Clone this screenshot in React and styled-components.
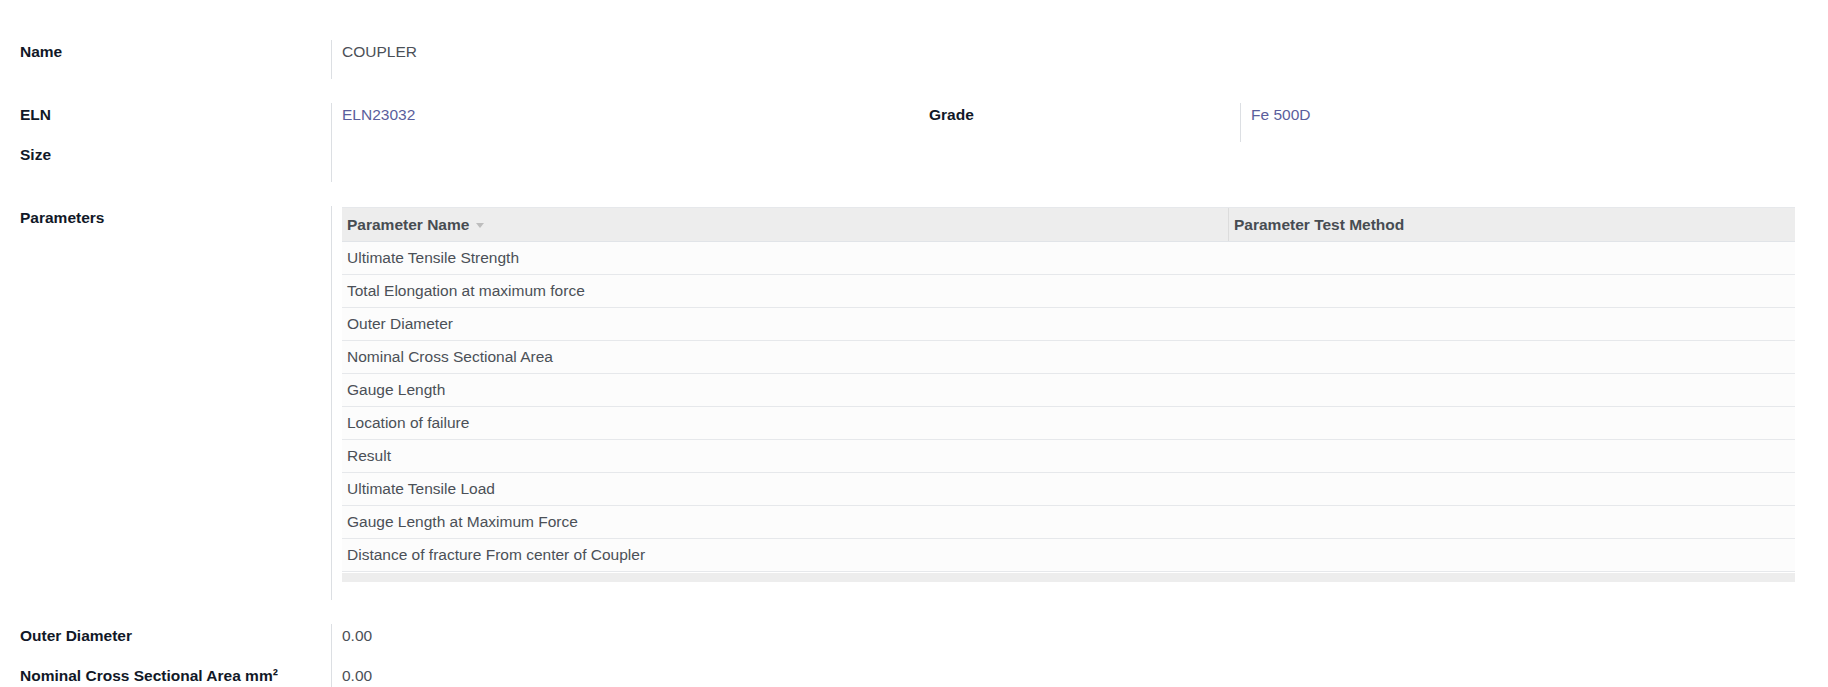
import React from 'react';
import styled, { createGlobalStyle } from 'styled-components';

const GlobalStyle = createGlobalStyle`
  html, body {
    margin: 0;
    padding: 0;
    background: #ffffff;
  }
  body {
    font-family: "Liberation Sans", Arial, sans-serif;
    font-size: 15.5px;
    color: #212529;
  }
`;

const Sheet = styled.div`
  padding: 40px 33px 0 20px;
  display: flex;
  flex-direction: column;
  gap: 24px;
`;

const Group = styled.div`
  display: grid;
  grid-template-columns: ${(p) => (p.split ? '909px 1fr' : '1fr')};
`;

const Column = styled.div`
  display: flex;
  flex-direction: column;
`;

const Field = styled.div`
  display: grid;
  grid-template-columns: 311px 1fr;
  min-height: ${(p) => (p.roomy ? '40px' : '39px')};
`;

const Label = styled.div`
  font-weight: 700;
  color: #111827;
  line-height: 22px;
  padding-top: 1px;
`;

const Value = styled.div`
  border-left: 1px solid #dcdfe3;
  padding: 1px 0 0 10px;
  line-height: 22px;
  color: ${(p) => (p.link ? '#5a5e9c' : '#4b5057')};
  padding-bottom: ${(p) => (p.tall ? '18px' : '0')};
`;

const Table = styled.div`
  display: flex;
  flex-direction: column;
`;

const HeadRow = styled.div`
  display: grid;
  grid-template-columns: 886px 1fr;
  background: #ededed;
  border-top: 1px solid #e6e8eb;
  border-bottom: 1px solid #e1e4e8;
  height: 33px;
`;

const HeadCell = styled.div`
  display: flex;
  align-items: center;
  gap: 7px;
  padding-left: 5px;
  font-weight: 700;
  color: #474c52;
  & + & {
    border-left: 1px solid #dcdcdc;
  }
`;

const Caret = styled.span`
  width: 0;
  height: 0;
  border-left: 4px solid transparent;
  border-right: 4px solid transparent;
  border-top: 5px solid #bdbdbd;
  margin-top: 2px;
`;

const BodyRow = styled.div`
  height: 32px;
  border-bottom: 1px solid #e6e8eb;
  background: #fcfcfc;
  display: flex;
  align-items: center;
  padding-left: 5px;
  color: #4b5057;
`;

const Footer = styled.div`
  height: 9px;
  background: #ededed;
  margin-top: 1px;
`;

const params = [
  'Ultimate Tensile Strength',
  'Total Elongation at maximum force',
  'Outer Diameter',
  'Nominal Cross Sectional Area',
  'Gauge Length',
  'Location of failure',
  'Result',
  'Ultimate Tensile Load',
  'Gauge Length at Maximum Force',
  'Distance of fracture From center of Coupler',
];

export default function App() {
  return (
    <>
      <GlobalStyle />
      <Sheet>
        <Group>
          <Field>
            <Label>Name</Label>
            <Value>COUPLER</Value>
          </Field>
        </Group>

        <Group split>
          <Column>
            <Field roomy>
              <Label>ELN</Label>
              <Value link>ELN23032</Value>
            </Field>
            <Field>
              <Label>Size</Label>
              <Value />
            </Field>
          </Column>
          <Column>
            <Field>
              <Label>Grade</Label>
              <Value link>Fe 500D</Value>
            </Field>
          </Column>
        </Group>

        <Group>
          <Field>
            <Label>Parameters</Label>
            <Value tall>
              <Table>
                <HeadRow>
                  <HeadCell>
                    Parameter Name <Caret />
                  </HeadCell>
                  <HeadCell>Parameter Test Method</HeadCell>
                </HeadRow>
                {params.map((name) => (
                  <BodyRow key={name}>{name}</BodyRow>
                ))}
                <Footer />
              </Table>
            </Value>
          </Field>
        </Group>

        <Group>
          <Field roomy>
            <Label>Outer Diameter</Label>
            <Value>0.00</Value>
          </Field>
          <Field>
            <Label>Nominal Cross Sectional Area mm²</Label>
            <Value>0.00</Value>
          </Field>
        </Group>
      </Sheet>
    </>
  );
}
